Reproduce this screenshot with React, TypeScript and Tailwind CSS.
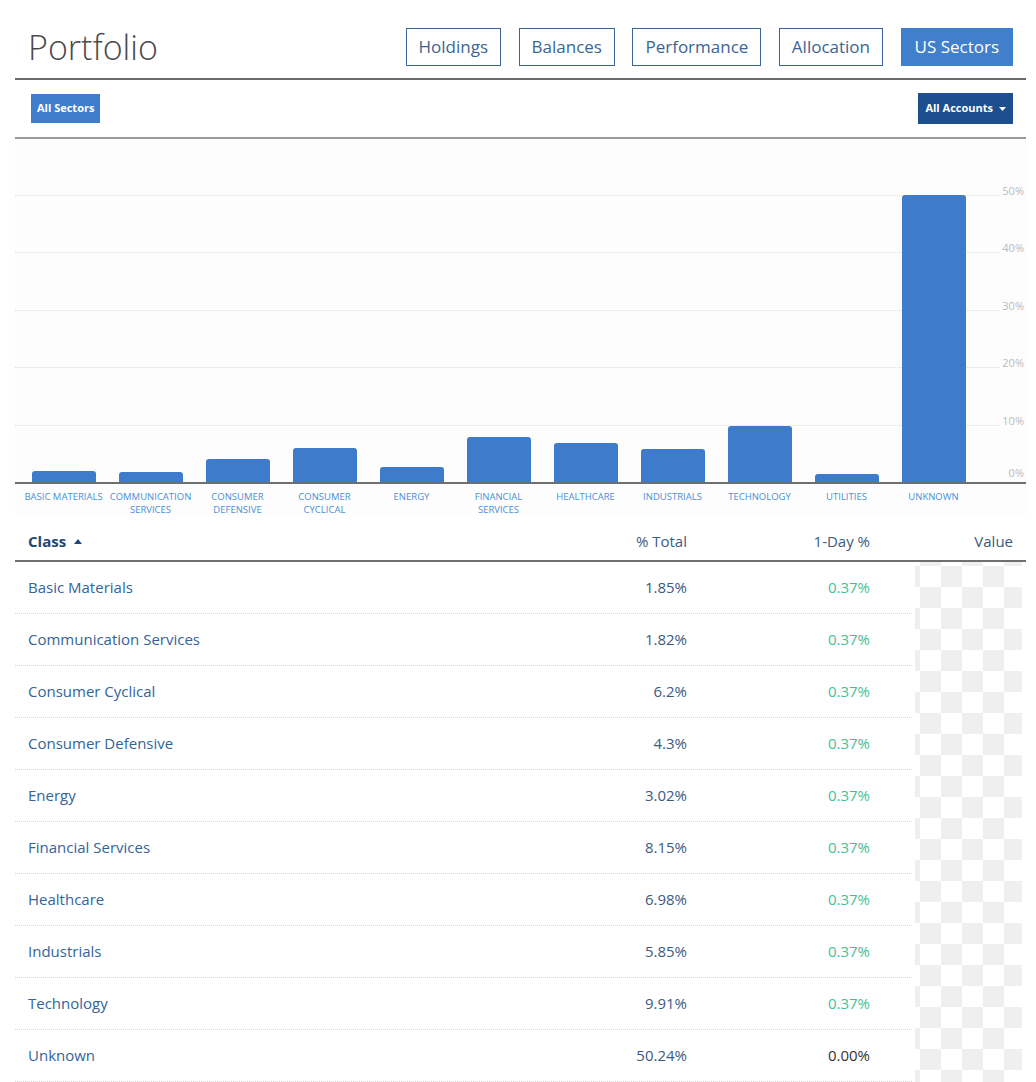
const tabs = ["Holdings", "Balances", "Performance", "Allocation", "US Sectors"];

const sectors = [
  { label: ["BASIC MATERIALS"], pct: 1.85 },
  { label: ["COMMUNICATION", "SERVICES"], pct: 1.82 },
  { label: ["CONSUMER", "DEFENSIVE"], pct: 4.0 },
  { label: ["CONSUMER", "CYCLICAL"], pct: 5.9 },
  { label: ["ENERGY"], pct: 2.7 },
  { label: ["FINANCIAL", "SERVICES"], pct: 7.9 },
  { label: ["HEALTHCARE"], pct: 6.8 },
  { label: ["INDUSTRIALS"], pct: 5.7 },
  { label: ["TECHNOLOGY"], pct: 9.7 },
  { label: ["UTILITIES"], pct: 1.4 },
  { label: ["UNKNOWN"], pct: 50.0 },
];

const rows = [
  { name: "Basic Materials", total: "1.85%", day: "0.37%" },
  { name: "Communication Services", total: "1.82%", day: "0.37%" },
  { name: "Consumer Cyclical", total: "6.2%", day: "0.37%" },
  { name: "Consumer Defensive", total: "4.3%", day: "0.37%" },
  { name: "Energy", total: "3.02%", day: "0.37%" },
  { name: "Financial Services", total: "8.15%", day: "0.37%" },
  { name: "Healthcare", total: "6.98%", day: "0.37%" },
  { name: "Industrials", total: "5.85%", day: "0.37%" },
  { name: "Technology", total: "9.91%", day: "0.37%" },
  { name: "Unknown", total: "50.24%", day: "0.00%" },
];

const PX_PER_PCT = 5.74;

function SectorChart() {
  return (
    <div className="bg-[#fdfdfd] pt-[56px]">
      <div className="relative h-[289px] border-b-2 border-[#6f6f6f]">
        {[50, 40, 30, 20, 10].map((v) => (
          <div key={v} className="relative mr-[26px] h-[57.4px] border-t border-dotted border-[#dcdcdc]">
            <span className="absolute -right-[24px] -top-[13px] text-[11px] text-[#bbbbbb]">{v}%</span>
          </div>
        ))}
        <span className="absolute bottom-[1px] right-[2px] text-[11px] text-[#bbbbbb]">0%</span>
        <div className="absolute inset-0 grid grid-cols-[repeat(11,87px)] items-end pl-[5px]">
          {sectors.map((s) => (
            <div key={s.label.join()} className="flex justify-center">
              <div
                className="w-[64px] rounded-t-[3px] bg-[#3e7bca]"
                style={{ height: s.pct * PX_PER_PCT }}
              />
            </div>
          ))}
        </div>
      </div>
      <div className="grid grid-cols-[repeat(11,87px)] pl-[5px] pt-[6px]">
        {sectors.map((s) => (
          <div key={s.label.join()} className="text-center text-[9.5px] leading-[13px] text-[#4c8fd6] whitespace-nowrap">
            {s.label.map((l) => (
              <div key={l}>{l}</div>
            ))}
          </div>
        ))}
      </div>
    </div>
  );
}

function SectorTable() {
  return (
    <div className="mt-[6px] text-[15px]">
      <div className="flex h-[40px] items-center border-b-2 border-[#6f6f6f] pr-[13px] text-[#3b5b82]">
        <div className="flex flex-1 items-center gap-[8px] pl-[13px] font-bold text-[#1f4876]">
          Class
          <svg width="8" height="5" viewBox="0 0 8 5">
            <path d="M0 5 L4 0 L8 5 Z" fill="#1f4876" />
          </svg>
        </div>
        <div className="w-[150px] text-right">% Total</div>
        <div className="w-[183px] text-right">1-Day %</div>
        <div className="w-[143px] text-right">Value</div>
      </div>
      {rows.map((r) => (
        <div key={r.name} className="flex h-[52px]">
          <div className="flex w-[897px] items-center border-b border-dotted border-[#d6d6d6]">
            <div className="flex-1 pl-[13px] text-[#33649a]">{r.name}</div>
            <div className="w-[150px] text-right text-[#3b5b82]">{r.total}</div>
            <div className={`w-[183px] text-right ${r.day === "0.00%" ? "text-[#333333]" : "text-[#3fbf98]"}`}>{r.day}</div>
            <div className="w-[42px]" />
          </div>
          <div className="ml-[3px] w-[107px] bg-[repeating-conic-gradient(#efefef_0_25%,#ffffff_0_50%)] bg-[length:42px_42px] bg-fixed bg-[position:-4px_20px]" />
        </div>
      ))}
    </div>
  );
}

export default function App() {
  return (
    <div className="min-h-screen bg-white pl-[15px] pr-[10px] font-['Open_Sans',sans-serif]">
      <div className="flex items-center justify-between border-b-2 border-[#6a6a6a] pb-[12px] pl-[13px] pr-[13px] pt-[28px]">
        <h1 className="text-[34px] font-light leading-none text-[#4a4a4a]">Portfolio</h1>
        <div className="flex gap-[17.5px]">
          {tabs.map((t) => (
            <button
              key={t}
              className={
                t === "US Sectors"
                  ? "h-[38px] border border-[#3f7fcc] bg-[#3f7fcc] px-[13px] text-[17px] text-white"
                  : "h-[38px] border border-[#3a6593] bg-white px-[12px] text-[17px] text-[#3a6593]"
              }
            >
              {t}
            </button>
          ))}
        </div>
      </div>
      <div className="flex h-[59px] items-center justify-between border-b-2 border-[#9a9a9a] pl-[16px] pr-[13px]">
        <button className="h-[29px] bg-[#3f7dcd] px-[6px] text-[11px] font-bold text-white">All Sectors</button>
        <button className="flex h-[31px] items-center gap-[6px] bg-[#1d4e8e] px-[7px] text-[11px] font-bold text-white">
          All Accounts
          <svg width="7" height="4" viewBox="0 0 7 4">
            <path d="M0 0 L7 0 L3.5 4 Z" fill="#ffffff" />
          </svg>
        </button>
      </div>
      <SectorChart />
      <SectorTable />
    </div>
  );
}
